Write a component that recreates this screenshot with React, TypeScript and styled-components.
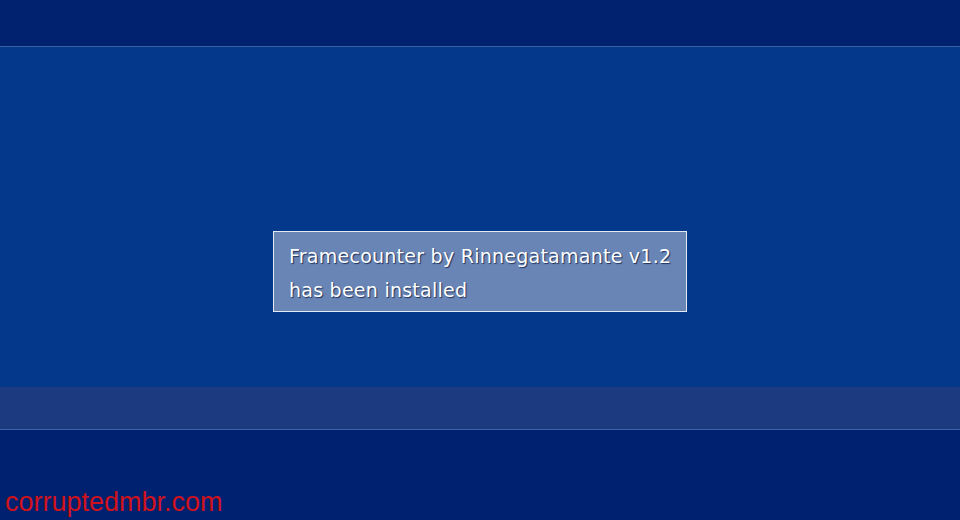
import styled, { createGlobalStyle } from "styled-components";

const GlobalStyle = createGlobalStyle`
  html, body {
    margin: 0;
    padding: 0;
    background: #00216e;
  }
  #root {
    width: 960px;
    height: 520px;
  }
`;

const Screen = styled.div`
  display: flex;
  flex-direction: column;
  width: 960px;
  height: 520px;
  overflow: hidden;
  font-family: "DejaVu Sans", "Liberation Sans", sans-serif;
`;

const TopBar = styled.div`
  flex: none;
  height: 46px;
  background: #01226e;
  border-bottom: 1px solid #3a5fa3;
`;

const Main = styled.div`
  flex: 1;
  display: flex;
  justify-content: center;
  align-items: flex-start;
  padding-top: 184px;
  background: #04388a;
`;

const Dialog = styled.div`
  box-sizing: border-box;
  width: 414px;
  height: 81px;
  padding: 7px 0 0 15px;
  background: #6985b6;
  border: 1px solid #e4eaf4;
  color: #ffffff;
  font-size: 19px;
  line-height: 34px;
  letter-spacing: 0.25px;
  text-shadow: 1px 1px 1px rgba(10, 30, 70, 0.8);
  white-space: nowrap;
`;

const Band = styled.div`
  flex: none;
  height: 42px;
  background: #1c3a80;
  border-bottom: 1px solid #3f62a6;
`;

const Bottom = styled.div`
  flex: none;
  height: 90px;
  box-sizing: border-box;
  display: flex;
  align-items: flex-end;
  padding: 0 0 3px 5px;
  background: #00216f;
`;

const Watermark = styled.span`
  font-family: "Liberation Sans", Arial, sans-serif;
  font-size: 27px;
  line-height: 30px;
  color: #d0121c;
`;

export default function App() {
  return (
    <>
      <GlobalStyle />
      <Screen>
        <TopBar />
        <Main>
          <Dialog>
            Framecounter by Rinnegatamante v1.2
            <br />
            has been installed
          </Dialog>
        </Main>
        <Band />
        <Bottom>
          <Watermark>corruptedmbr.com</Watermark>
        </Bottom>
      </Screen>
    </>
  );
}
